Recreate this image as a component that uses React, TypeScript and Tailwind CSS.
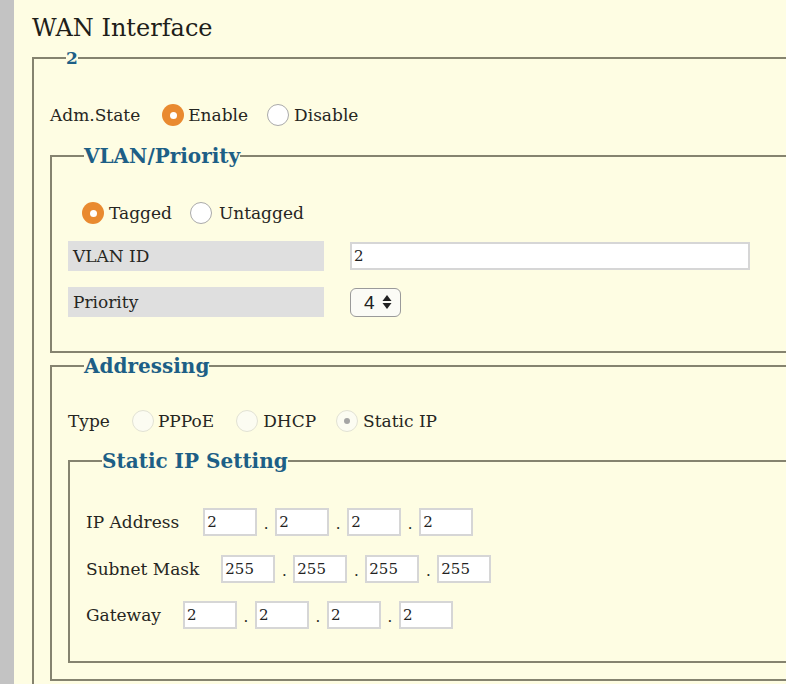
import React from 'react';

type RadioKind = 'on' | 'off' | 'faint' | 'faintOn';

const serif = '"DejaVu Serif", serif';

// Radio dot drawn with spans so the colours match the router skin
function Radio({ kind }: { kind: RadioKind }) {
  if (kind === 'on') {
    return (
      <span className="w-[22px] h-[22px] rounded-full bg-[#e98a30] flex items-center justify-center shrink-0">
        <span className="w-[7px] h-[7px] rounded-full bg-white" />
      </span>
    );
  }
  if (kind === 'off') {
    return <span className="w-[22px] h-[22px] rounded-full bg-white border border-[#aaaaaa] shrink-0" />;
  }
  return (
    <span className="w-[22px] h-[22px] rounded-full bg-[#fcfcf2] border border-[#e2e2d4] flex items-center justify-center shrink-0">
      {kind === 'faintOn' && <span className="w-[6px] h-[6px] rounded-full bg-[#a5a5a5]" />}
    </span>
  );
}

function Legend({ children, small }: { children: React.ReactNode; small?: boolean }) {
  return (
    <legend
      className={`ml-4 leading-[24px] font-bold text-[#1d5f86] ${small ? 'text-[17px]' : 'text-[20px]'}`}
      style={{ fontFamily: serif }}
    >
      {children}
    </legend>
  );
}

function IpRow({ label, values, gap }: { label: string; values: string[]; gap: string }) {
  return (
    <div className="flex items-center h-[30px]">
      <span className={`leading-[24px] ${gap}`}>{label}</span>
      {values.map((v, i) => (
        <React.Fragment key={i}>
          {i > 0 && <span className="w-[18px] text-center text-[15px] leading-[24px] pt-[4px]">.</span>}
          <input
            readOnly
            value={v}
            className="w-[54px] h-[28px] bg-white border-2 border-[#d6d6d6] px-[2px] text-[15px] text-[#222] outline-none"
            style={{ fontFamily: serif }}
          />
        </React.Fragment>
      ))}
    </div>
  );
}

export default function App() {
  return (
    <div
      className="flex min-h-[684px] w-[786px] overflow-hidden bg-[#fefde3] text-[17px] text-[#262622]"
      style={{ fontFamily: serif }}
    >
      <div className="w-[14px] shrink-0 bg-[#c3c3c3]" />
      <div className="pl-[18px]">
        <h1 className="pt-[11px] text-[24px] leading-[34px] font-normal text-[#1e1e1a]">WAN Interface</h1>

        <fieldset className="mt-[1px] w-[900px] border-2 border-[#85836f] pl-4 pb-10">
          <Legend small>2</Legend>

          <div className="mt-[30px] flex items-center h-[30px]">
            <span className="leading-[24px] mr-[22px]">Adm.State</span>
            <Radio kind="on" />
            <span className="leading-[24px] ml-[4px] mr-[19px]">Enable</span>
            <Radio kind="off" />
            <span className="leading-[24px] ml-[5px]">Disable</span>
          </div>

          <fieldset className="mt-[14px] border-2 border-[#85836f] pl-4 pb-[34px]">
            <Legend>VLAN/Priority</Legend>

            <div className="mt-[30px] ml-[14px] flex items-center h-[30px]">
              <Radio kind="on" />
              <span className="leading-[24px] ml-[5px] mr-[18px]">Tagged</span>
              <Radio kind="off" />
              <span className="leading-[24px] ml-[7px]">Untagged</span>
            </div>

            <div className="mt-[13px] flex items-center">
              <div className="w-[256px] h-[30px] bg-[#dfdfdf] pl-[5px] flex items-center leading-[24px]">VLAN ID</div>
              <input
                readOnly
                value="2"
                className="ml-[26px] w-[400px] h-[28px] bg-white border-2 border-[#d6d6d6] px-[2px] text-[15px] text-[#222] outline-none"
                style={{ fontFamily: serif }}
              />
            </div>

            <div className="mt-[16px] flex items-center">
              <div className="w-[256px] h-[30px] bg-[#dfdfdf] pl-[5px] flex items-center leading-[24px]">Priority</div>
              <div className="ml-[26px] w-[51px] h-[29px] rounded-[6px] border border-[#9a9a9a] bg-[#fbfbf6] flex items-center pl-[13px] gap-[7px]">
                <span className="text-[19px] leading-none text-[#222]" style={{ fontFamily: '"Liberation Sans", sans-serif' }}>4</span>
                <svg width="10" height="16" viewBox="0 0 10 16">
                  <path d="M5 1 L9.5 7 L0.5 7 Z" fill="#222" />
                  <path d="M5 15 L9.5 9 L0.5 9 Z" fill="#222" />
                </svg>
              </div>
            </div>
          </fieldset>

          <fieldset className="mt-[1px] border-2 border-[#85836f] pl-4 pb-[16px]">
            <Legend>Addressing</Legend>

            <div className="mt-[28px] flex items-center h-[30px]">
              <span className="leading-[24px] mr-[22px]">Type</span>
              <Radio kind="faint" />
              <span className="leading-[24px] ml-[4px] mr-[22px]">PPPoE</span>
              <Radio kind="faint" />
              <span className="leading-[24px] ml-[5px] mr-[20px]">DHCP</span>
              <Radio kind="faintOn" />
              <span className="leading-[24px] ml-[5px]">Static IP</span>
            </div>

            <fieldset className="mt-[13px] border-2 border-[#85836f] pl-4 pb-[31px]">
              <Legend>Static IP Setting</Legend>
              <div className="mt-[34px]">
                <IpRow label="IP Address" values={['2', '2', '2', '2']} gap="mr-[24px]" />
              </div>
              <div className="mt-[17px]">
                <IpRow label="Subnet Mask" values={['255', '255', '255', '255']} gap="mr-[22px]" />
              </div>
              <div className="mt-[16px]">
                <IpRow label="Gateway" values={['2', '2', '2', '2']} gap="mr-[22px]" />
              </div>
            </fieldset>
          </fieldset>
        </fieldset>
      </div>
    </div>
  );
}
